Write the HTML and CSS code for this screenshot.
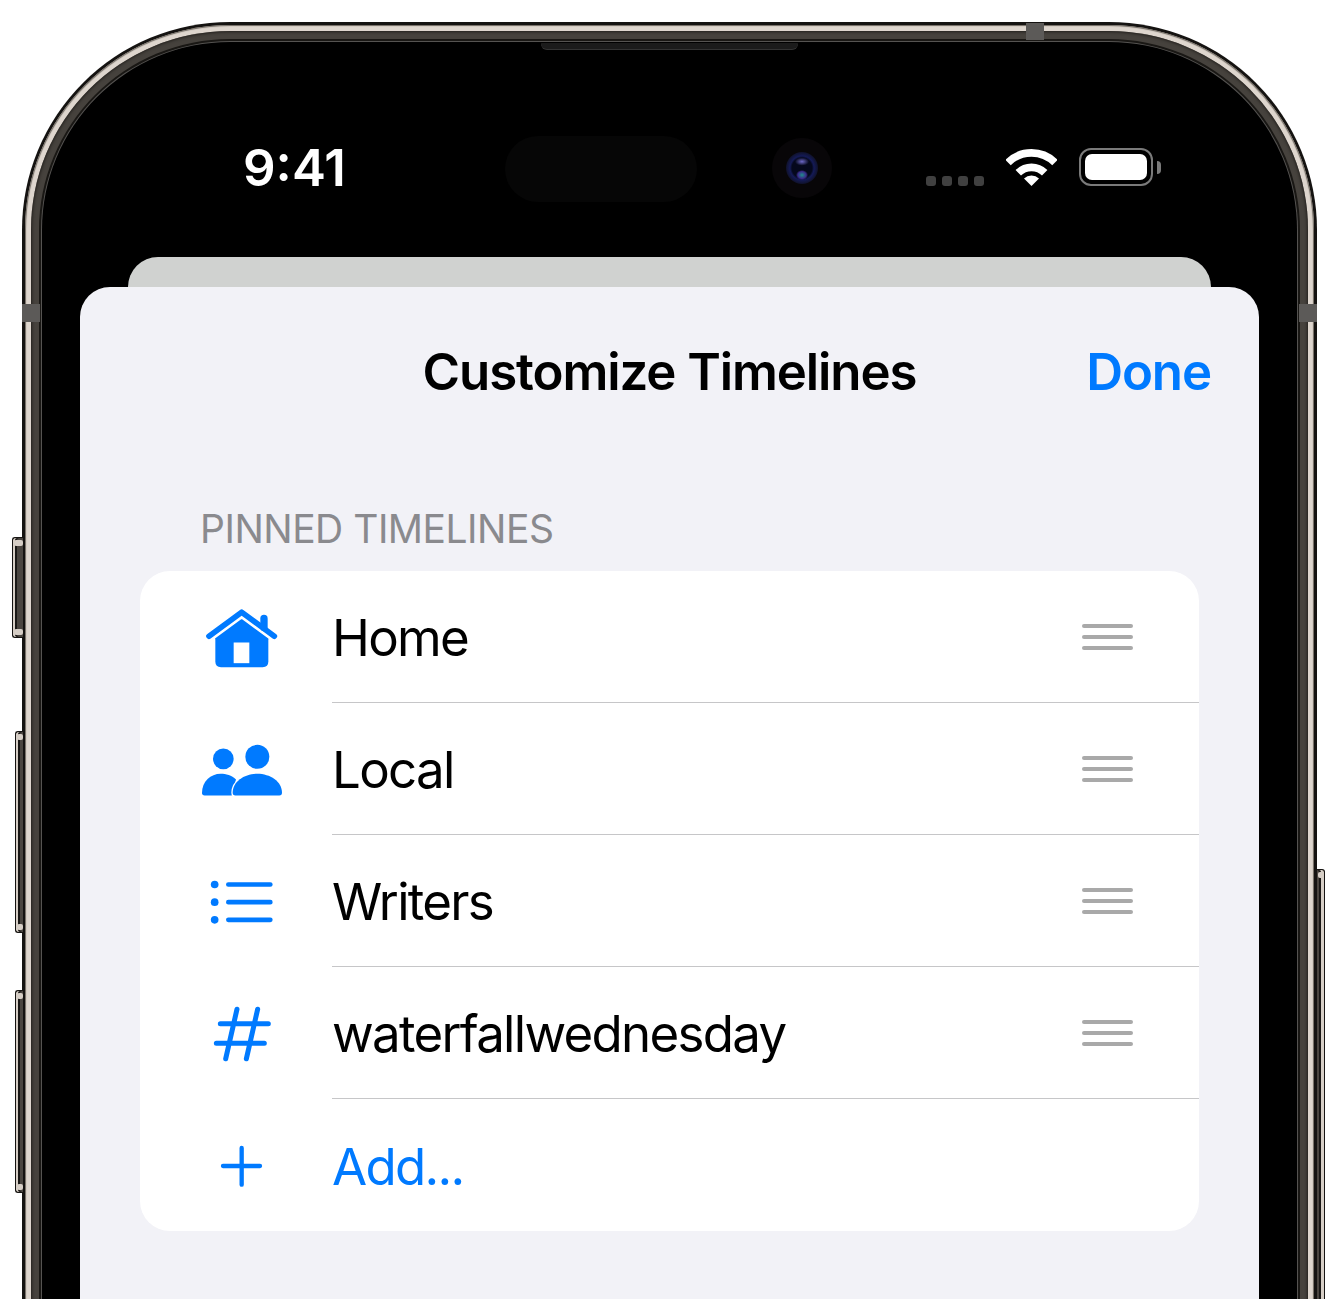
FILE: index.html
```html
<!DOCTYPE html>
<html lang="en">
<head>
<meta charset="utf-8">
<title>Customize Timelines</title>
<link rel="stylesheet" href="styles.css">
</head>
<body>
<div class="phone">
  <div class="hw-btn hw-left hw-silent"></div>
  <div class="hw-btn hw-left hw-up"></div>
  <div class="hw-btn hw-left hw-down"></div>
  <div class="hw-btn hw-right hw-power"></div>
  <div class="band band-top"></div>
  <div class="band band-left"></div>
  <div class="band band-right"></div>
  <div class="ring ring-edge">
    <div class="ring ring-metal">
      <div class="ring ring-dark">
        <div class="ring ring-shade">
          <div class="ring ring-line">
            <div class="ring ring-gap">
              <div class="screen">
                <div class="speaker"></div>
                <div class="status">
                  <div class="time">9:41</div>
                  <div class="island"></div>
                  <div class="camera"><div class="lens"></div></div>
                  <div class="signal"><i></i><i></i><i></i><i></i></div>
                  <svg class="wifi" viewBox="318 444 153 117">
                    <path class="wifi-arc" d="M324.1 487.6A99.5 99.5 0 0 1 464.9 487.6"/>
                    <path class="wifi-arc" d="M354.9 518.4A56 56 0 0 1 434.1 518.4"/>
                    <path class="wifi-tip" d="M394.5 558L372 535.5A32 32 0 0 1 417 535.5Z"/>
                  </svg>
                  <div class="battery"><div class="battery-fill"></div></div>
                  <div class="battery-nub"></div>
                </div>
                <div class="sheet-back"></div>
                <div class="sheet">
                  <div class="nav">
                    <div></div>
                    <div class="nav-title">Customize Timelines</div>
                    <div class="nav-done">Done</div>
                  </div>
                  <div class="section-label">PINNED TIMELINES</div>
                  <div class="card">
                    <div class="row">
                      <svg class="row-icon" viewBox="36 4.5 240 240">
                        <path class="ic-fill" d="M76 100L155 72L235 100V198Q235 215 218 215H93Q76 215 76 198Z"/>
                        <path class="ic-fill" d="M155 72L76 132V100L155 60L235 100V132Z"/>
                        <path class="ic-gap" d="M57 122L155 50L253 122"/>
                        <path class="ic-roof" d="M57 122L155 50L253 122"/>
                        <path class="ic-chimney" d="M222 69V96"/>
                        <rect class="ic-door" x="131" y="141" width="47" height="62"/>
                      </svg>
                      <div class="row-main"><span class="row-text">Home</span><div class="grip"><i></i><i></i><i></i></div></div>
                    </div>
                    <div class="row">
                      <svg class="row-icon" viewBox="36 400.5 240 240">
                        <circle class="ic-fill" cx="100" cy="490" r="31"/>
                        <circle class="ic-fill" cx="202" cy="484" r="36"/>
                        <path class="ic-fill" d="M36 592C36 558 62 535 92 535C108 535 125 540 138 552L125 600H44Q36 600 36 592Z"/>
                        <path class="ic-body" d="M128 592C128 558 164 535 202 535C240 535 276 558 276 592Q276 600 268 600H136Q128 600 128 592Z"/>
                      </svg>
                      <div class="row-main"><span class="row-text">Local</span><div class="grip"><i></i><i></i><i></i></div></div>
                    </div>
                    <div class="row">
                      <svg class="row-icon" viewBox="36 -28.5 240 240">
                        <circle class="ic-fill" cx="74" cy="42" r="11.5"/>
                        <circle class="ic-fill" cx="74" cy="95" r="11.5"/>
                        <circle class="ic-fill" cx="74" cy="148" r="11.5"/>
                        <path class="ic-list" d="M115 42H241M115 95H241M115 148H241"/>
                      </svg>
                      <div class="row-main"><span class="row-text">Writers</span><div class="grip"><i></i><i></i><i></i></div></div>
                    </div>
                    <div class="row">
                      <svg class="row-icon" viewBox="36 367.5 240 240">
                        <path class="ic-hash" d="M141 416L107 565M203 416L169 565M91 460H235M79 518H223"/>
                      </svg>
                      <div class="row-main"><span class="row-text">waterfallwednesday</span><div class="grip"><i></i><i></i><i></i></div></div>
                    </div>
                    <div class="row">
                      <svg class="row-icon" viewBox="36 765 240 240">
                        <path class="ic-line" d="M155 834V944M99 888H210"/>
                      </svg>
                      <div class="row-main row-main-last"><span class="row-text row-text-add">Add...</span></div>
                    </div>
                  </div>
                </div>
              </div>
            </div>
          </div>
        </div>
      </div>
    </div>
  </div>
</div>
</body>
</html>
```
FILE: styles.css
```css
html, body {
  margin: 0;
  height: 100%;
  background: #fff;
  overflow: hidden;
}
body {
  padding: 22px 0 0 22px;
  box-sizing: border-box;
  font-family: Inter, "Liberation Sans", sans-serif;
}
.phone {
  position: relative;
  width: 1295px;
}
.ring { box-sizing: border-box; }
.ring-edge {
  background: #151311;
  padding: 3px;
  border-radius: 208px;
}
.ring-metal {
  background: #ded6ce;
  padding: 6px;
  border-radius: 205px;
  box-shadow: inset 0 0 1px 1px #6e6860;
}
.ring-dark {
  background: #46423d;
  padding: 8px;
  border-radius: 199px;
  box-shadow: inset 0 0 3px 1px #23201d;
}
.ring-shade {
  background: #191714;
  padding: 2px;
  border-radius: 191px;
}
.ring-line {
  background: #555351;
  padding: 1px;
  border-radius: 189px;
}
.ring-gap {
  background: #000;
  padding: 1px;
  border-radius: 188px;
}
.screen {
  position: relative;
  background: #000;
  border-radius: 187px;
  height: 1500px;
  overflow: hidden;
}
.speaker {
  position: absolute;
  left: 498px;
  top: 0;
  width: 257px;
  height: 6px;
  background: #1b1b1b;
  border-radius: 0 0 8px 8px;
  box-shadow: 0 1px 0 #333;
}
.status {
  display: flex;
  align-items: flex-start;
  height: 121px;
  padding: 93px 0 0 201px;
}
.time {
  flex: none;
  width: 262px;
  margin-left: -1px;
  color: #fff;
  font-size: 51px;
  font-weight: 600;
  line-height: 64px;
}
.island {
  width: 192px;
  height: 66px;
  border-radius: 33px;
  background: #060606;
  flex: none;
}
.camera {
  flex: none;
  width: 60px;
  height: 60px;
  margin: 2px 0 0 75px;
  border-radius: 50%;
  background: #080608;
  display: flex;
  align-items: center;
  justify-content: center;
}
.lens {
  width: 32px;
  height: 32px;
  border-radius: 50%;
  background: radial-gradient(ellipse 7px 4px at 50% 30%, #6d68c8 0, transparent 100%),
              radial-gradient(ellipse 6px 5px at 50% 72%, #1f8d8a 0, #3a2a8a 70%, transparent 100%),
              radial-gradient(circle, #05081c 0 10px, #141a56 12px, #10122a 16px);
}
.signal {
  flex: none;
  display: flex;
  gap: 6px;
  margin: 40px 0 0 94px;
}
.signal i {
  width: 10px;
  height: 10px;
  border-radius: 3px;
  background: #404040;
}
.wifi {
  flex: none;
  width: 51px;
  height: 39px;
  margin: 12px 0 0 22px;
}
.wifi-arc { fill: none; stroke: #fff; stroke-width: 23; }
.wifi-tip { fill: #fff; }
.battery {
  flex: none;
  box-sizing: border-box;
  width: 74px;
  height: 38px;
  margin: 12px 0 0 22px;
  padding: 4px;
  border: 2px solid #7a7a7a;
  border-radius: 12px;
}
.battery-fill {
  height: 100%;
  background: #fff;
  border-radius: 7px;
}
.battery-nub {
  flex: none;
  width: 4px;
  height: 13px;
  margin: 25px 0 0 4px;
  background: #7a7a7a;
  border-radius: 0 4px 4px 0;
}
.sheet-back {
  height: 30px;
  margin: 0 85px;
  background: #d0d2d0;
  border-radius: 30px 30px 0 0;
}
.sheet {
  margin: 0 37px;
  height: 1200px;
  background: #f2f2f7;
  border-radius: 30px 30px 0 0;
}
.nav {
  display: grid;
  grid-template-columns: 1fr auto 1fr;
  align-items: center;
  box-sizing: border-box;
  height: 170px;
  padding: 0 48px 2px;
}
.nav-title {
  font-size: 51px;
  font-weight: 600;
  letter-spacing: -1.1px;
  color: #000;
}
.nav-done {
  justify-self: end;
  font-size: 51px;
  font-weight: 600;
  letter-spacing: -1.1px;
  color: #007aff;
}
.section-label {
  display: flex;
  align-items: flex-end;
  box-sizing: border-box;
  height: 114px;
  padding: 0 0 18px 120px;
  font-size: 39px;
  letter-spacing: -0.5px;
  line-height: 48px;
  color: #8a8a8e;
}
.card {
  margin: 0 60px;
  background: #fff;
  border-radius: 30px;
  overflow: hidden;
}
.row {
  display: flex;
  align-items: center;
  height: 132px;
  padding-left: 62px;
}
.row-icon {
  flex: none;
  width: 80px;
  height: 80px;
  margin-right: 50px;
}
.row-main {
  flex: 1;
  align-self: stretch;
  display: flex;
  align-items: center;
  justify-content: space-between;
  padding: 2px 66px 0 0;
  border-bottom: 1px solid #c6c6c8;
}
.row-main-last { border-bottom: 0; }
.row-text {
  font-size: 51px;
  letter-spacing: -1.7px;
  color: #000;
}
.row-text-add { color: #007aff; }
.grip {
  display: flex;
  flex-direction: column;
  gap: 7px;
  width: 51px;
  margin-top: -2px;
}
.grip i {
  height: 4px;
  background: #a9a9a9;
  border-radius: 2px;
}
.ic-fill { fill: #007aff; }
.ic-gap { fill: none; stroke: #fff; stroke-width: 33; stroke-linecap: round; }
.ic-roof { fill: none; stroke: #007aff; stroke-width: 17; stroke-linecap: round; stroke-linejoin: round; }
.ic-chimney { fill: none; stroke: #007aff; stroke-width: 22; stroke-linecap: round; }
.ic-door { fill: #fff; }
.ic-body { fill: #007aff; stroke: #fff; stroke-width: 8; paint-order: stroke; }
.ic-line { fill: none; stroke: #007aff; stroke-width: 13; stroke-linecap: round; }
.ic-list { fill: none; stroke: #007aff; stroke-width: 14; stroke-linecap: round; }
.ic-hash { fill: none; stroke: #007aff; stroke-width: 15; stroke-linecap: round; }
.hw-btn {
  position: absolute;
  box-sizing: border-box;
  background: #4a4540;
  border: 1px solid #161412;
}
.hw-left {
  border-right: 0;
  border-radius: 3px 0 0 3px;
  box-shadow: inset 2px 0 0 #d6cec6, inset 4px 0 0 #1a1816;
}
.hw-right {
  border-left: 0;
  border-radius: 0 3px 0 0;
  box-shadow: inset -3px 0 0 #d6cec6, inset -5px 0 0 #1a1816;
}
.hw-btn::before,
.hw-btn::after {
  content: "";
  position: absolute;
  left: 1px;
  right: 0;
  height: 6px;
  background: #d6cec6;
  border-radius: 2px;
}
.hw-btn::before { top: 2px; }
.hw-btn::after { bottom: 2px; }
.hw-silent { left: -10px; top: 515px; width: 11px; height: 101px; }
.hw-up { left: -7px; top: 709px; width: 8px; height: 202px; }
.hw-down { left: -7px; top: 968px; width: 8px; height: 203px; }
.hw-power { right: -8px; top: 847px; width: 8px; height: 500px; }
.band {
  position: absolute;
  background: #5c5a58;
  z-index: 1;
}
.band-top { left: 1004px; top: 1px; width: 18px; height: 17px; }
.band-left { left: 0; top: 282px; width: 18px; height: 18px; }
.band-right { right: 0; top: 282px; width: 18px; height: 18px; }
```
